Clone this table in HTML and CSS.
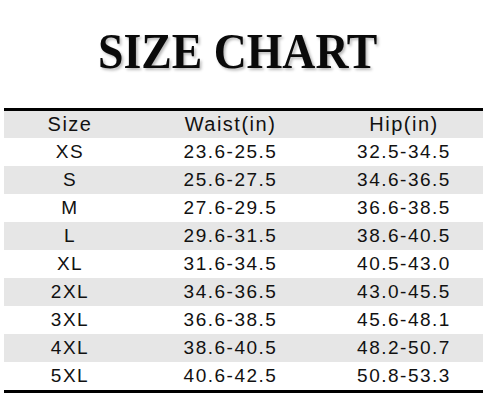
FILE: index.html
```html
<!DOCTYPE html>
<html>
<head>
<meta charset="utf-8">
<link rel="stylesheet" href="styles.css">
</head>
<body>
<div class="page">
  <h1 class="title"><span class="title-text">SIZE CHART</span></h1>
  <table class="chart">
    <colgroup>
      <col class="c1"><col class="c2"><col class="c3">
    </colgroup>
    <thead>
      <tr class="head"><th>Size</th><th>Waist(in)</th><th>Hip(in)</th></tr>
    </thead>
    <tbody>
      <tr><td>XS</td><td>23.6-25.5</td><td>32.5-34.5</td></tr>
      <tr><td>S</td><td>25.6-27.5</td><td>34.6-36.5</td></tr>
      <tr><td>M</td><td>27.6-29.5</td><td>36.6-38.5</td></tr>
      <tr><td>L</td><td>29.6-31.5</td><td>38.6-40.5</td></tr>
      <tr><td>XL</td><td>31.6-34.5</td><td>40.5-43.0</td></tr>
      <tr><td>2XL</td><td>34.6-36.5</td><td>43.0-45.5</td></tr>
      <tr><td>3XL</td><td>36.6-38.5</td><td>45.6-48.1</td></tr>
      <tr><td>4XL</td><td>38.6-40.5</td><td>48.2-50.7</td></tr>
      <tr><td>5XL</td><td>40.6-42.5</td><td>50.8-53.3</td></tr>
    </tbody>
  </table>
</div>
</body>
</html>
```

FILE: styles.css
```css
html, body {
  margin: 0;
  padding: 0;
  background: #ffffff;
}
.page {
  width: 488px;
  height: 402px;
  overflow: hidden;
}
.title {
  margin: 0;
  padding-top: 26px;
  padding-right: 12px;
  height: 51px;
  text-align: center;
  font-family: "Liberation Serif", "Times New Roman", serif;
  font-weight: bold;
  font-size: 51px;
  line-height: 51px;
  color: #0a0a0a;
}
.title-text {
  display: inline-block;
  transform: scaleX(0.897);
  text-shadow: 2px 2px 3px rgba(0, 0, 0, 0.28);
}
.chart {
  margin: 31px 0 0 4px;
  width: 479px;
  border-collapse: collapse;
  table-layout: fixed;
  border-top: 3px solid #000;
  border-bottom: 3px solid #000;
  font-family: "Liberation Sans", Arial, sans-serif;
  color: #111;
}
.c1 { width: 132px; }
.c2 { width: 189px; }
.c3 { width: 158px; }
.chart th,
.chart td {
  padding: 0;
  text-align: center;
  font-weight: normal;
}
.chart th {
  height: 27px;
  font-size: 20px;
  letter-spacing: 1.5px;
}
.chart td {
  height: 28px;
  font-size: 19px;
  letter-spacing: 1.5px;
}
.head { background: #e6e6e6; }
.chart tbody tr:nth-child(even) { background: #e6e6e6; }
.chart tbody tr:nth-child(odd) { background: #ffffff; }
```
